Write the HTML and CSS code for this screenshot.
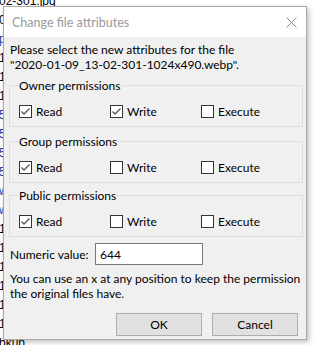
FILE: index.html
```html
<!DOCTYPE html>
<html>
<head>
<meta charset="utf-8">
<link rel="stylesheet" href="styles.css">
</head>
<body>
<div class="backdrop">
  <div class="bg-line">02-301.jpg</div>
  <div class="bg-line">0</div>
  <div class="bg-line link">p</div>
  <div class="bg-line">1</div>
  <div class="bg-line">1</div>
  <div class="bg-line">1</div>
  <div class="bg-line link">5</div>
  <div class="bg-line link">5</div>
  <div class="bg-line link">5</div>
  <div class="bg-line link">5</div>
  <div class="bg-line link">w</div>
  <div class="bg-line link">w</div>
  <div class="bg-line">1</div>
  <div class="bg-line">1</div>
  <div class="bg-line">1</div>
  <div class="bg-line">1</div>
  <div class="bg-line">1</div>
  <div class="bg-line">1</div>
  <div class="bg-line">bkup</div>
</div>

<div class="dialog">
  <div class="titlebar">
    <span class="title">Change file attributes</span>
    <svg class="close" width="11" height="11" viewBox="0 0 11 11"><path d="M0.5 0.5 L10.5 10.5 M10.5 0.5 L0.5 10.5" stroke="#8a8a8a" stroke-width="1" fill="none"/></svg>
  </div>
  <div class="content">
    <p class="intro">Please select the new attributes for the file<br>"2020-01-09_13-02-301-1024x490.webp".</p>

    <div class="group g1">
      <div class="legend">Owner permissions</div>
      <div class="row">
        <span class="opt"><span class="cb"><svg width="11" height="11" viewBox="0 0 11 11"><path d="M1.5 5.5 L4 8 L9.5 2.5" stroke="#555" stroke-width="1.3" fill="none"/></svg></span>Read</span>
        <span class="opt"><span class="cb"><svg width="11" height="11" viewBox="0 0 11 11"><path d="M1.5 5.5 L4 8 L9.5 2.5" stroke="#555" stroke-width="1.3" fill="none"/></svg></span>Write</span>
        <span class="opt"><span class="cb"></span>Execute</span>
      </div>
    </div>

    <div class="group g2">
      <div class="legend">Group permissions</div>
      <div class="row">
        <span class="opt"><span class="cb"><svg width="11" height="11" viewBox="0 0 11 11"><path d="M1.5 5.5 L4 8 L9.5 2.5" stroke="#555" stroke-width="1.3" fill="none"/></svg></span>Read</span>
        <span class="opt"><span class="cb"></span>Write</span>
        <span class="opt"><span class="cb"></span>Execute</span>
      </div>
    </div>

    <div class="group g3">
      <div class="legend">Public permissions</div>
      <div class="row">
        <span class="opt"><span class="cb"><svg width="11" height="11" viewBox="0 0 11 11"><path d="M1.5 5.5 L4 8 L9.5 2.5" stroke="#555" stroke-width="1.3" fill="none"/></svg></span>Read</span>
        <span class="opt"><span class="cb"></span>Write</span>
        <span class="opt"><span class="cb"></span>Execute</span>
      </div>
    </div>

    <div class="numeric">
      <span class="num-label">Numeric value:</span>
      <span class="input">644</span>
    </div>

    <p class="hint">You can use an x at any position to keep the permission<br>the original files have.</p>

    <div class="buttons">
      <span class="btn">OK</span>
      <span class="btn">Cancel</span>
    </div>
  </div>
</div>
</body>
</html>
```

FILE: styles.css
```css
html, body {
  margin: 0;
  padding: 0;
  background: #ffffff;
  width: 319px;
  height: 345px;
  overflow: hidden;
}

body {
  font-family: "Lato", "Segoe UI", sans-serif;
  font-size: 12px;
  color: #000;
  position: relative;
}

.backdrop {
  margin-top: -8px;
  margin-left: -1px;
  font-family: "Liberation Sans", sans-serif;
  font-size: 12px;
  line-height: 19px;
}

.bg-line { color: #000; white-space: nowrap; }
.bg-line.link { color: #1f3f9f; }

.dialog {
  position: absolute;
  left: 3px;
  top: 6px;
  width: 302px;
  height: 332px;
  border: 1px solid #a9a9a9;
  background: #f0f0f0;
  box-shadow: 2px 2px 5px rgba(0,0,0,0.25);
  display: flex;
  flex-direction: column;
}

.titlebar {
  height: 30px;
  background: #ffffff;
  display: flex;
  align-items: center;
  justify-content: space-between;
  padding: 0 9px 0 8px;
  flex-shrink: 0;
}

.title {
  color: #9a9a9a;
  font-size: 12.5px;
}

.close { display: block; }

.content {
  padding: 0 3px 0 5px;
}

.intro {
  margin: 5px 0 0 1px;
  line-height: 15px;
  white-space: nowrap;
}

.group {
  border: 1px solid #dcdcdc;
  padding: 0 9px 8px 9px;
}

.legend {
  display: block;
  width: max-content;
  margin-top: -8px;
  margin-left: -1px;
  padding: 0 1px;
  background: #f0f0f0;
  line-height: 15px;
}

.g1 { margin-top: 13px; }
.g2 { margin-top: 14px; }
.g3 { margin-top: 12px; }

.row {
  display: grid;
  grid-template-columns: 91px 91px 91px;
  margin-top: 12px;
}

.opt {
  display: flex;
  align-items: center;
  height: 13px;
}

.cb {
  width: 11px;
  height: 11px;
  border: 1px solid #333;
  background: #fff;
  margin-right: 4px;
  display: flex;
  flex-shrink: 0;
}

.numeric {
  display: flex;
  align-items: center;
  margin-top: 6px;
  margin-left: 1px;
}

.num-label { width: 85px; }

.input {
  width: 102px;
  height: 20px;
  border: 1px solid #7a7a7a;
  background: #fff;
  padding-left: 4px;
  display: flex;
  align-items: center;
}

.hint {
  margin: 6px 0 0 1px;
  line-height: 15px;
  white-space: nowrap;
}

.buttons {
  display: flex;
  justify-content: flex-end;
  gap: 10px;
  margin-top: 12px;
  padding-right: 5px;
}

.btn {
  width: 84px;
  height: 21px;
  border: 1px solid #adadad;
  background: #e1e1e1;
  display: flex;
  align-items: center;
  justify-content: center;
}
```
